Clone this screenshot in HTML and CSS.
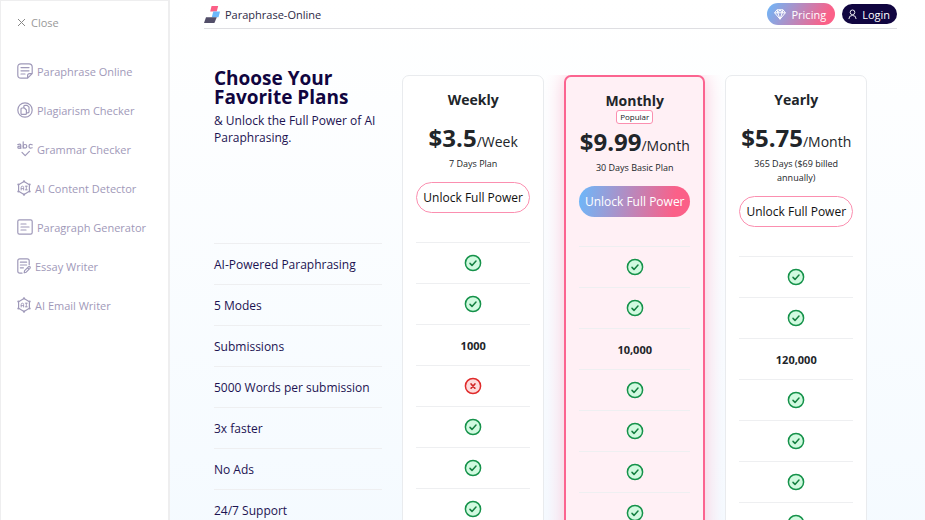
FILE: index.html
```html
<!DOCTYPE html>
<html lang="en">
<head>
  <meta charset="UTF-8" />
  <meta name="viewport" content="width=device-width, initial-scale=1.0"/>
  <title>Pricing | Paraphrase-Online</title>
  <link rel="stylesheet" href="styles.css">
</head>
<body>
  <!-- shared icons -->
  <svg class="sprite" aria-hidden="true">
    <symbol id="check" viewBox="0 0 18 18">
      <circle cx="9" cy="9" r="7.6" fill="#d1fae0" stroke="#15924a" stroke-width="1.5"/>
      <path d="M6 9.4l2 2 4-4.4" fill="none" stroke="#157f40" stroke-width="1.5" stroke-linecap="round" stroke-linejoin="round"/>
    </symbol>
    <symbol id="cross" viewBox="0 0 18 18">
      <circle cx="9" cy="9" r="7.6" fill="#fddcdc" stroke="#e02b2b" stroke-width="1.5"/>
      <path d="M7.1 7l3.8 4.2M10.9 7l-3.8 4.2" fill="none" stroke="#d12626" stroke-width="1.7" stroke-linecap="round"/>
    </symbol>
    <symbol id="ai" viewBox="0 0 14 16">
      <path d="M7 1.6l5.4 3.2v6.4L7 14.4l-5.4-3.2V4.8z"/>
      <path d="M4.2 10V7.2q0-1 1.2-1t1.2 1V10M4.2 8.6h2.4M8.3 6.2h2M8.3 9.8h2M9.3 6.2v3.6" stroke-width=".9"/>
      <g fill="currentColor" stroke="none"><circle cx="7" cy="1.3" r="1.1"/><circle cx="7" cy="14.7" r="1.1"/><circle cx="1.3" cy="4.6" r="1"/><circle cx="12.7" cy="4.6" r="1"/><circle cx="1.3" cy="11.4" r="1"/><circle cx="12.7" cy="11.4" r="1"/></g>
    </symbol>
  </svg>

  <div class="layout">
    <aside class="sidebar">
      <button type="button" class="close">
        <svg class="close-icon" viewBox="0 0 9 9"><path d="M1 1l7 7M8 1L1 8"/></svg>
        Close
      </button>
      <nav class="menu">
        <a href="#">
          <svg class="icon" viewBox="0 0 16 16"><path d="M10.6 15.2H4Q.8 15.2.8 12V4Q.8.8 4 .8h8Q15.2.8 15.2 4v6.6l-4.6 4.6v-2.6q0-2 2-2h2.6M4 4.6h8M4 7.8h8M4 11h4"/></svg>
          Paraphrase Online
        </a>
        <a href="#">
          <svg class="icon" viewBox="0 0 16 16"><circle cx="8" cy="8" r="7.2"/><path d="M6.8 5.6V4.4q0-1 1-1h2.4l1.8 1.8v4.6q0 1-1 1h-1.4M4 7q0-1 1-1h2.4l2 2v3.4q0 1-1 1H5q-1 0-1-1z"/></svg>
          Plagiarism Checker
        </a>
        <a href="#">
          <svg class="icon" viewBox="0 0 16 16"><path d="M.8 3.6q3-1.4 3 .8v3M3.8 5.2Q.8 5 .8 6.3q0 1 1.1 1 1.2 0 1.9-1.2M6.2.8v6.4"/><circle cx="8" cy="5.3" r="1.8"/><path d="M15.2 3.8q-3.2-1.2-3.2 1.5t3.2 1.5M5 11.4l3.2 3.2 4.2-4.2"/></svg>
          Grammar Checker
        </a>
        <a href="#">
          <svg class="icon narrow"><use href="#ai"/></svg>
          AI Content Detector
        </a>
        <a href="#">
          <svg class="icon" viewBox="0 0 16 16"><rect x=".8" y=".8" width="14.4" height="14.4" rx="1.6"/><path d="M4 5h5M4 8h8M4 11h5"/></svg>
          Paragraph Generator
        </a>
        <a href="#">
          <svg class="icon narrow" viewBox="0 0 14 16"><path d="M5 15.2H2.8q-2 0-2-2V2.8q0-2 2-2h7.4q2 0 2 2v4M3.4 4.2h6.2M3.4 7h6.2M3.4 9.8h3M7.2 14.8l.4-2.2 3.8-3.8q.8-.6 1.5 0t0 1.5l-3.7 3.9zM10.6 9.8l1.4 1.4"/></svg>
          Essay Writer
        </a>
        <a href="#">
          <svg class="icon narrow"><use href="#ai"/></svg>
          AI Email Writer
        </a>
      </nav>
    </aside>

    <main class="main">
      <header class="header">
        <a href="#" class="brand">
          <svg class="logo" viewBox="0 0 16 17"><path d="M7.6 0h6.6l-1.5 5.4H6.2z" fill="#fb5f86"/><path d="M9.3 5.4H16l-1.5 5.8H7.8z" fill="#6bb8fb"/><path d="M2 11.2h10.8L10.4 17H0z" fill="#524e69"/></svg>
          Paraphrase-Online
        </a>
        <div class="actions">
          <a href="#" class="pill pricing">
            <svg class="gem" viewBox="0 0 12 11"><path d="M3 .8h6l2.4 3L6 10.2.6 3.8zM.6 3.8h10.8M3 .8l.8 3L6 10.2l2.2-6.4.8-3M3.8 3.8L6 .8l2.2 3"/></svg>
            Pricing
          </a>
          <a href="#" class="pill login">
            <svg class="user" viewBox="0 0 10 12"><circle cx="5" cy="3.6" r="2.6"/><path d="M1 11q0-4 4-4t4 4"/></svg>
            Login
          </a>
        </div>
      </header>

      <section class="plans">
        <div class="features">
          <div class="intro">
            <h1>Choose Your Favorite Plans</h1>
            <p>&amp; Unlock the Full Power of AI Paraphrasing.</p>
          </div>
          <ul class="rows">
            <li>AI-Powered Paraphrasing</li>
            <li>5 Modes</li>
            <li>Submissions</li>
            <li>5000 Words per submission</li>
            <li>3x faster</li>
            <li>No Ads</li>
            <li>24/7 Support</li>
          </ul>
        </div>

        <div class="card">
          <h2>Weekly</h2>
          <p class="price"><strong>$3.5</strong>/Week</p>
          <p class="term">7 Days Plan</p>
          <button type="button" class="unlock">Unlock Full Power</button>
          <ul class="rows">
            <li><svg><use href="#check"/></svg></li>
            <li><svg><use href="#check"/></svg></li>
            <li>1000</li>
            <li><svg><use href="#cross"/></svg></li>
            <li><svg><use href="#check"/></svg></li>
            <li><svg><use href="#check"/></svg></li>
            <li><svg><use href="#check"/></svg></li>
          </ul>
        </div>

        <div class="card popular">
          <h2>Monthly</h2>
          <span class="badge">Popular</span>
          <p class="price"><strong>$9.99</strong>/Month</p>
          <p class="term">30 Days Basic Plan</p>
          <button type="button" class="unlock">Unlock Full Power</button>
          <ul class="rows">
            <li><svg><use href="#check"/></svg></li>
            <li><svg><use href="#check"/></svg></li>
            <li>10,000</li>
            <li><svg><use href="#check"/></svg></li>
            <li><svg><use href="#check"/></svg></li>
            <li><svg><use href="#check"/></svg></li>
            <li><svg><use href="#check"/></svg></li>
          </ul>
        </div>

        <div class="card">
          <h2>Yearly</h2>
          <p class="price"><strong>$5.75</strong>/Month</p>
          <p class="term">365 Days ($69 billed annually)</p>
          <button type="button" class="unlock">Unlock Full Power</button>
          <ul class="rows">
            <li><svg><use href="#check"/></svg></li>
            <li><svg><use href="#check"/></svg></li>
            <li>120,000</li>
            <li><svg><use href="#check"/></svg></li>
            <li><svg><use href="#check"/></svg></li>
            <li><svg><use href="#check"/></svg></li>
            <li><svg><use href="#check"/></svg></li>
          </ul>
        </div>
      </section>
    </main>
  </div>
</body>
</html>
```
FILE: styles.css
```css
* {
  box-sizing: border-box;
}

body {
  margin: 0;
  font-family: 'Open Sans', 'Noto Sans', sans-serif;
  font-size: 12px;
  color: #212529;
}

h1, h2, p, ul {
  margin: 0;
  padding: 0;
}

a {
  color: inherit;
  text-decoration: none;
}

button {
  font-family: inherit;
  cursor: pointer;
}

.sprite {
  display: none;
}

.layout {
  display: grid;
  grid-template-columns: 170px 1fr;
  height: 100vh;
  overflow: hidden;
}

/* Sidebar */
.sidebar {
  border: 1px solid #eeeeef;
  border-right-width: 2px;
  padding: 11px 16px;
  background: #fff;
  font-size: 11px;
}

.close {
  display: flex;
  align-items: center;
  gap: 5px;
  height: 20px;
  padding: 0;
  border: none;
  background: none;
  font-size: 11px;
  color: #999;
}

.close-icon {
  width: 9px;
  height: 9px;
  fill: none;
  stroke: #888;
}

.menu {
  display: flex;
  flex-direction: column;
  gap: 19px;
  margin-top: 29px;
  color: #9f99b9;
}

.menu a {
  display: flex;
  align-items: center;
  gap: 4px;
  height: 20px;
  white-space: nowrap;
}

.icon {
  flex-shrink: 0;
  width: 16px;
  height: 16px;
  fill: none;
  stroke: currentColor;
  stroke-width: 1.2;
  stroke-linecap: round;
  stroke-linejoin: round;
}

.icon.narrow {
  width: 14px;
}

/* Header */
.main {
  padding: 0 28px 0 34px;
  background: linear-gradient(#fff, #f4faff);
}

.header {
  display: flex;
  align-items: center;
  justify-content: space-between;
  height: 29px;
  border-bottom: 1px solid #dedee2;
}

.brand {
  display: flex;
  align-items: center;
  gap: 5px;
  font-size: 11px;
  color: #2d2945;
}

.logo {
  width: 16px;
  height: 17px;
}

.actions {
  display: flex;
  align-items: center;
  gap: 7px;
}

.pill {
  display: flex;
  align-items: center;
  gap: 5px;
  height: 20px;
  padding: 0 7px 0 6px;
  border-radius: 11px;
  font-size: 11px;
  color: #fff;
}

.pill svg {
  fill: none;
  stroke: #fff;
  stroke-linejoin: round;
}

.pricing {
  height: 22px;
  padding: 0 9px 0 7px;
  background: linear-gradient(120deg, #6bb8fb, #fb6088 85%);
}

.login {
  background: #100540;
}

.gem {
  width: 12px;
  height: 11px;
}

.user {
  width: 9px;
  height: 11px;
}

/* Plans */
.plans {
  display: grid;
  grid-template-columns: 169fr 142fr 142fr 142fr;
  align-items: start;
  gap: 20px;
  padding: 46px 30px 0 10px;
}

.features {
  color: #1c1352;
}

.intro {
  height: 174px;
  margin-top: -6px;
}

.intro h1 {
  font-size: 19px;
  line-height: 19px;
  color: #100540;
}

.intro p {
  margin-top: 5px;
  line-height: 17px;
}

.rows {
  list-style: none;
}

.rows li {
  display: flex;
  align-items: center;
  height: 41px;
  border-top: 1px solid #eeeff1;
}

.rows svg {
  width: 18px;
  height: 18px;
}

.card {
  display: flex;
  flex-direction: column;
  align-items: center;
  padding: 15px 13px;
  border: 1px solid #e9ebee;
  border-radius: 7px;
  background: #fff;
  text-align: center;
}

.card h2 {
  font-size: 14px;
  line-height: 18px;
}

.price {
  margin-top: 14px;
  font-size: 14px;
  line-height: 30px;
  white-space: nowrap;
}

.price strong {
  font-size: 24px;
}

.term {
  font-size: 9px;
  line-height: 14px;
}

.unlock {
  align-self: stretch;
  height: 31px;
  margin-top: 11px;
  padding: 0;
  border: 1px solid #fb8fb0;
  border-radius: 16px;
  background: #fff;
  font-size: 12px;
  color: #111;
  white-space: nowrap;
}

.card .rows {
  align-self: stretch;
  margin-top: 29px;
}

.card .rows li {
  justify-content: center;
  font-size: 11px;
  font-weight: 700;
}

/* shadow only falls to the sides and below */
.popular {
  border: 2px solid #fb6490;
  background: #fff0f5;
  box-shadow: 0 0 20px #fbc4d6;
  clip-path: inset(0 -24px -24px);
}

.popular .badge {
  padding: 0 3px;
  border: 1px solid #fb8fb0;
  border-radius: 3px;
  background: #fff;
  font-size: 8px;
  line-height: 12px;
}

.popular .price {
  margin-top: 3px;
}

.popular .unlock {
  border: none;
  background: linear-gradient(100deg, #6bb8fb, #fb6088 85%);
  color: #fff;
}
```
